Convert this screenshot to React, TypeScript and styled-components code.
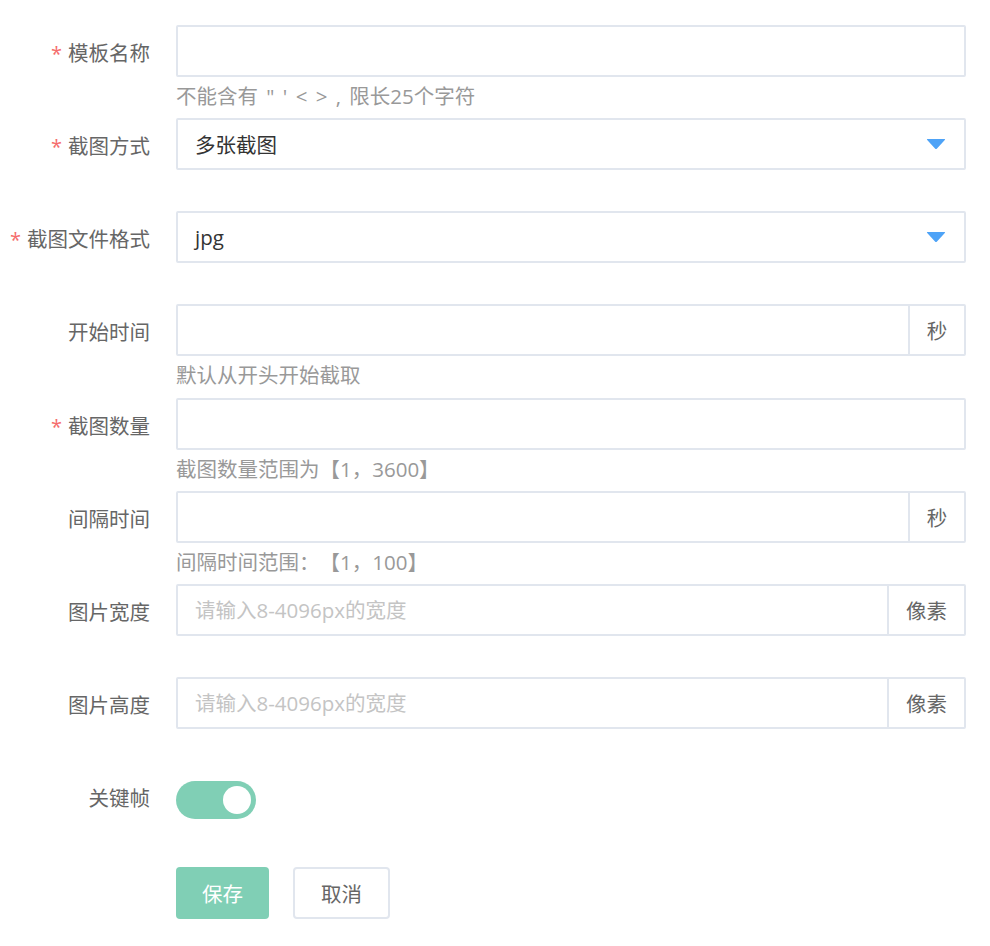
import React from "react";
import styled, { createGlobalStyle } from "styled-components";

const Global = createGlobalStyle`
  html, body { margin: 0; padding: 0; background: #fff; }
  body { font-family: "Open Sans", "Noto Sans CJK SC", sans-serif; text-spacing-trim: space-all; }
  * { box-sizing: border-box; }
`;

const Form = styled.form`
  width: 990px;
  padding: 25px 24px 0 0;
  display: flex;
  flex-direction: column;
`;

const Item = styled.div<{ $h?: number }>`
  display: grid;
  grid-template-columns: 150px 1fr;
  column-gap: 26px;
  min-height: ${(p) => p.$h ?? 93}px;
  align-items: start;
`;

const Label = styled.label`
  height: 52px;
  padding-top: 2px;
  line-height: 52px;
  text-align: right;
  font-size: 20.5px;
  color: #666;
  white-space: nowrap;
`;

const Star = styled.span`
  color: #f56c6c;
  margin-right: 6px;
  font-size: 20px;
`;

const Content = styled.div`
  display: flex;
  flex-direction: column;
`;

const Group = styled.div`
  display: flex;
  height: 52px;
  border: 2px solid #e1e6ee;
  border-radius: 2px;
  background: #fff;
`;

const Field = styled.input`
  flex: 1;
  min-width: 0;
  border: none;
  outline: none;
  background: transparent;
  padding: 0 17px;
  font-family: inherit;
  font-size: 20.5px;
  color: #333;
  &::placeholder { color: #c4c4c4; }
`;

const Addon = styled.div<{ $w: number }>`
  width: ${(p) => p.$w}px;
  border-left: 2px solid #e1e6ee;
  display: flex;
  align-items: center;
  justify-content: center;
  font-size: 20.5px;
  color: #666;
`;

const SelectBox = styled.div`
  display: flex;
  align-items: center;
  height: 52px;
  border: 2px solid #e1e6ee;
  border-radius: 2px;
  padding: 0 18px 0 17px;
  font-size: 20.5px;
  color: #333;
`;

const SelectValue = styled.span`
  flex: 1;
`;

const Hint = styled.div`
  line-height: 38px;
  font-size: 20.5px;
  color: #999;
  white-space: pre;
  word-spacing: 3px;
`;

const Switch = styled.div`
  margin-top: 11px;
  width: 80px;
  height: 38px;
  border-radius: 19px;
  background: #80cfb5;
  position: relative;
`;

const Knob = styled.span`
  position: absolute;
  top: 5px;
  right: 5px;
  width: 28px;
  height: 28px;
  border-radius: 50%;
  background: #fff;
`;

const Buttons = styled.div`
  display: flex;
  gap: 24px;
  margin-top: 4px;
`;

const Btn = styled.button<{ $primary?: boolean; $w: number }>`
  width: ${(p) => p.$w}px;
  height: 52px;
  border-radius: 4px;
  font-family: inherit;
  font-size: 20.5px;
  cursor: pointer;
  border: ${(p) => (p.$primary ? "none" : "2px solid #e1e6ee")};
  background: ${(p) => (p.$primary ? "#80cfb5" : "#fff")};
  color: ${(p) => (p.$primary ? "#fff" : "#666")};
`;

const Arrow = () => (
  <svg width="20" height="12" viewBox="0 0 20 12">
    <path d="M1.5 1 H18.5 Q19.6 1 18.8 2 L11 10.5 Q10 11.6 9 10.5 L1.2 2 Q0.4 1 1.5 1 Z" fill="#4ea3f7" />
  </svg>
);

type RowProps = { label: string; required?: boolean; hint?: string; children: React.ReactNode; h?: number };

const Row = ({ label, required, hint, children, h }: RowProps) => (
  <Item $h={h}>
    <Label>
      {required && <Star>*</Star>}
      {label}
    </Label>
    <Content>
      {children}
      {hint && <Hint>{hint}</Hint>}
    </Content>
  </Item>
);

export default function App() {
  return (
    <>
      <Global />
      <Form onSubmit={(e) => e.preventDefault()}>
        <Row label="模板名称" required hint={"不能含有 \" ' < > , 限长25个字符"}>
          <Group>
            <Field />
          </Group>
        </Row>
        <Row label="截图方式" required>
          <SelectBox>
            <SelectValue>多张截图</SelectValue>
            <Arrow />
          </SelectBox>
        </Row>
        <Row label="截图文件格式" required>
          <SelectBox>
            <SelectValue>jpg</SelectValue>
            <Arrow />
          </SelectBox>
        </Row>
        <Row label="开始时间" hint="默认从开头开始截取" h={94}>
          <Group>
            <Field />
            <Addon $w={56}>秒</Addon>
          </Group>
        </Row>
        <Row label="截图数量" required hint="截图数量范围为【1，3600】">
          <Group>
            <Field />
          </Group>
        </Row>
        <Row label="间隔时间" hint="间隔时间范围：【1，100】">
          <Group>
            <Field />
            <Addon $w={56}>秒</Addon>
          </Group>
        </Row>
        <Row label="图片宽度">
          <Group>
            <Field placeholder="请输入8-4096px的宽度" />
            <Addon $w={77}>像素</Addon>
          </Group>
        </Row>
        <Row label="图片高度">
          <Group>
            <Field placeholder="请输入8-4096px的宽度" />
            <Addon $w={77}>像素</Addon>
          </Group>
        </Row>
        <Row label="关键帧">
          <Switch>
            <Knob />
          </Switch>
        </Row>
        <Row label="">
          <Buttons>
            <Btn $primary $w={93} type="submit">保存</Btn>
            <Btn $w={97} type="button">取消</Btn>
          </Buttons>
        </Row>
      </Form>
    </>
  );
}
